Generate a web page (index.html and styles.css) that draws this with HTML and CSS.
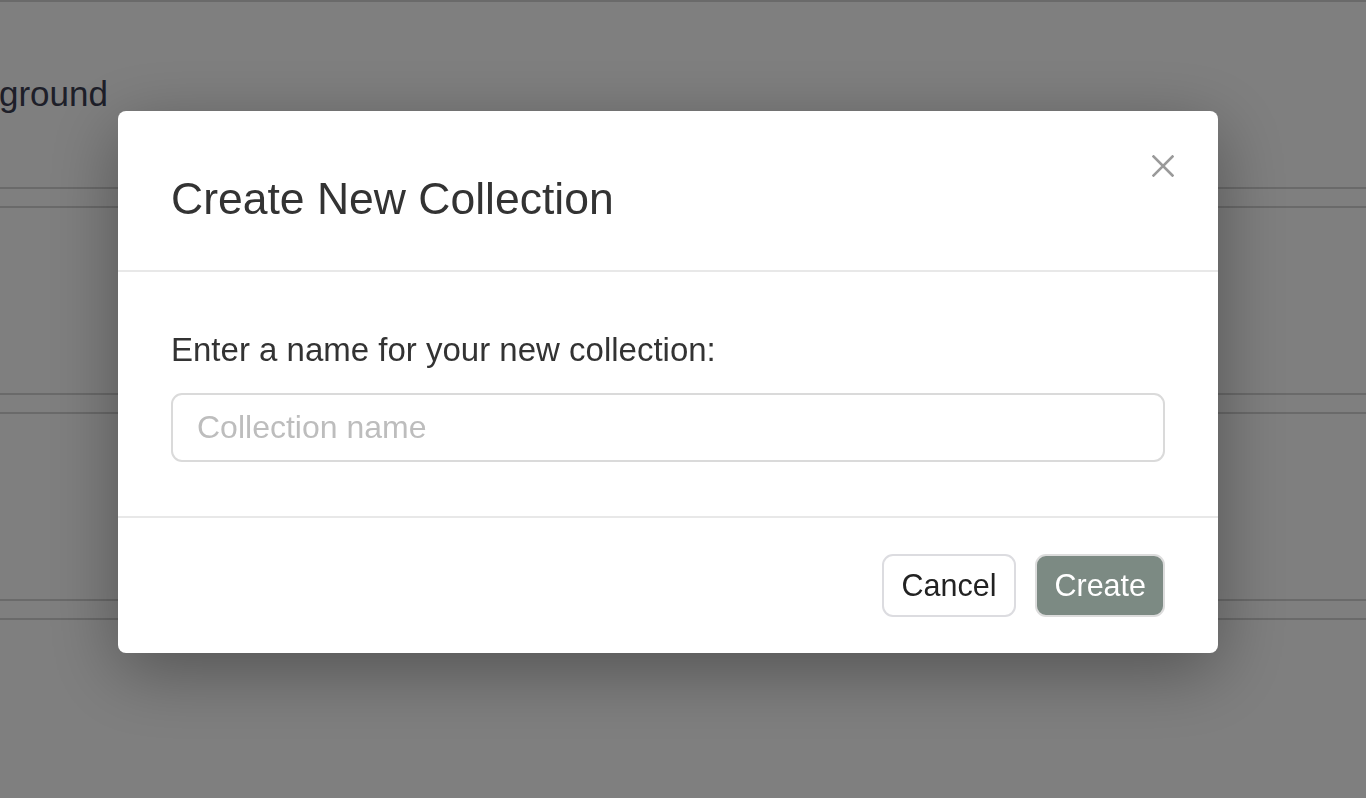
FILE: index.html
```html
<!DOCTYPE html>
<html lang="en">
<head>
<meta charset="utf-8">
<title>Create New Collection</title>
<link rel="stylesheet" href="styles.css">
</head>
<body>
<div class="page">
  <div class="topbar"></div>
  <div class="rows">
    <div class="page-head">
      <h2 class="page-title">ground</h2>
    </div>
    <div class="row"></div>
    <div class="row"></div>
    <div class="row row-last"></div>
  </div>
</div>

<div class="overlay">
  <div class="modal" role="dialog" aria-labelledby="modal-title">
    <div class="modal-header">
      <h1 class="modal-title" id="modal-title">Create New Collection</h1>
      <button class="close" aria-label="Close">
        <svg width="22" height="22" viewBox="0 0 22 22" aria-hidden="true">
          <path d="M1.5 1.5 L20.5 20.5 M20.5 1.5 L1.5 20.5" stroke="#9a9a9a" stroke-width="2.6" stroke-linecap="square" fill="none"/>
        </svg>
      </button>
    </div>
    <div class="modal-body">
      <label class="label" for="cname">Enter a name for your new collection:</label>
      <input class="input" id="cname" type="text" placeholder="Collection name">
    </div>
    <div class="modal-footer">
      <button class="btn btn-cancel">Cancel</button>
      <button class="btn btn-create">Create</button>
    </div>
  </div>
</div>
</body>
</html>
```

FILE: styles.css
```css
* { box-sizing: border-box; }

html, body {
  margin: 0;
  padding: 0;
  height: 100%;
  overflow: hidden;
}

body {
  background: #ffffff;
  font-family: "Liberation Sans", Arial, Helvetica, sans-serif;
  color: #333333;
}

.page {
  width: 100%;
  height: 100vh;
  overflow: hidden;
}

.topbar {
  height: 2px;
  background: #d4d4d4;
}

.rows {
  display: flex;
  flex-direction: column;
  gap: 17px;
}

.page-head {
  height: 187px;
  border-bottom: 2px solid #d4d4d4;
  padding-top: 72px;
}

.page-title {
  margin: 0 0 0 -1px;
  font-size: 35px;
  font-weight: normal;
  line-height: 40px;
  color: #3c3e52;
}

.row {
  height: 189px;
  border-top: 2px solid #d4d4d4;
  border-bottom: 2px solid #d4d4d4;
  flex-shrink: 0;
}

.overlay {
  position: fixed;
  inset: 0;
  background: rgba(0, 0, 0, 0.5);
  padding: 111px 0 0 118px;
}

.modal {
  width: 1100px;
  background: #ffffff;
  border-radius: 8px;
  box-shadow: 0 18px 70px rgba(0, 0, 0, 0.35);
}

.modal-header {
  position: relative;
  padding: 61px 53px 45px;
  border-bottom: 2px solid #e8e8e8;
}

.modal-title {
  margin: 0;
  font-size: 44.5px;
  font-weight: normal;
  line-height: 53px;
  color: #333333;
}

.close {
  position: absolute;
  top: 44px;
  right: 44px;
  width: 22px;
  height: 22px;
  padding: 0;
  border: 0;
  background: none;
  display: flex;
}

.modal-body {
  padding: 58px 53px 54px;
  display: flex;
  flex-direction: column;
}

.label {
  font-size: 33px;
  line-height: 40px;
  color: #333333;
  margin-bottom: 23px;
}

.input {
  width: 100%;
  height: 69px;
  border: 2px solid #dadada;
  border-radius: 11px;
  padding: 0 24px;
  font-family: "Liberation Sans", Arial, Helvetica, sans-serif;
  font-size: 32px;
  color: #333333;
  background: #ffffff;
  outline: none;
}

.input::placeholder {
  color: #bdbdbd;
}

.modal-footer {
  border-top: 2px solid #e8e8e8;
  padding: 36px 53px 36px;
  display: flex;
  justify-content: flex-end;
  gap: 19px;
}

.btn {
  height: 63px;
  padding: 0 18px;
  border-radius: 11px;
  font-family: "Liberation Sans", Arial, Helvetica, sans-serif;
  font-size: 30.5px;
  line-height: 1;
  cursor: pointer;
}

.btn-cancel {
  background: #ffffff;
  border: 2px solid #dcdce0;
  color: #222222;
}

.btn-create {
  background: #7c8a83;
  border: 2px solid #dcdcdc;
  color: #ffffff;
  padding: 0 17px;
}
```
